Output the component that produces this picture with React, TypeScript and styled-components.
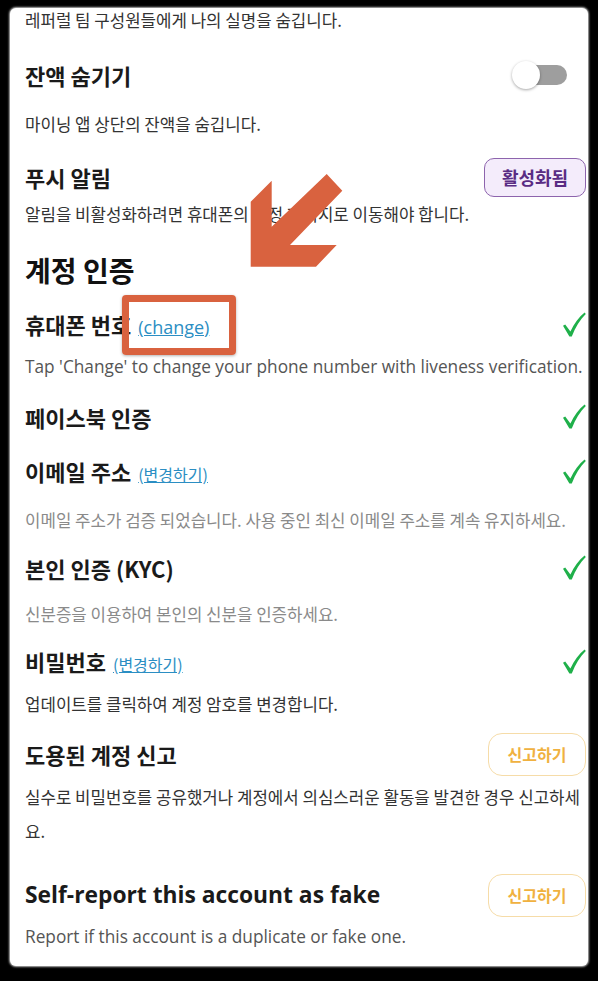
import React from 'react';
import styled, {createGlobalStyle} from 'styled-components';

const GlobalStyle = createGlobalStyle`
  html, body {
    margin: 0;
    padding: 0;
    background: #000;
  }
  body {
    font-family: "Noto Sans CJK KR", sans-serif;
    color: #222;
  }
`;

const EN = '"Open Sans", "Noto Sans CJK KR", sans-serif';
const KR = '"Noto Sans CJK KR", sans-serif';

const Screen = styled.div`
  width: 598px;
  height: 981px;
  padding: 8px 10px 15px 10px;
  box-sizing: border-box;
  overflow: hidden;
`;

const Card = styled.div`
  position: relative;
  height: 100%;
  background: #fff;
  border-radius: 6px;
  box-shadow: 0 0 2px 1px #bbb;
  padding: 0 2px 0 15px;
  box-sizing: border-box;
  overflow: hidden;
`;

const Block = styled.div<{ $mt: number }>`
  margin-top: ${p => p.$mt}px;
`;

const Head = styled.div<{ $mb: number }>`
  display: flex;
  align-items: center;
  justify-content: space-between;
  height: 32px;
  margin-bottom: ${p => p.$mb}px;
`;

const Title = styled.div<{ $en?: boolean }>`
  font-family: ${p => p.$en ? EN : KR};
  font-size: ${p => p.$en ? 22.8 : 22}px;
  font-weight: 700;
  color: #1a1a1a;
  line-height: 32px;
  white-space: nowrap;
`;

const Section = styled.div`
  font-family: ${KR};
  font-size: 28px;
  font-weight: 700;
  color: #111;
  line-height: 36px;
`;

const Desc = styled.div<{ $tone?: 'dark' | 'mid' | 'light'; $lh?: number; $en?: boolean }>`
  font-family: ${p => p.$en ? EN : KR};
  font-size: ${p => p.$en ? 17.25 : 16.8}px;
  line-height: ${p => p.$lh ?? 26}px;
  color: ${p => p.$tone === 'light' ? '#8a8a8a' : p.$tone === 'mid' ? '#555' : '#333'};
  white-space: ${p => p.$en ? 'nowrap' : 'normal'};
`;

const Link = styled.a<{ $en?: boolean }>`
  font-family: ${p => p.$en ? EN : KR};
  font-size: ${p => p.$en ? 18 : 16}px;
  font-weight: 400;
  color: #2b8ec3;
  text-decoration: underline;
  margin-left: 2px;
`;

const Toggle = styled.div`
  position: relative;
  width: 56px;
  height: 28px;
  margin-right: 18px;
  flex-shrink: 0;
  &::before {
    content: '';
    position: absolute;
    left: 9px;
    top: 4px;
    width: 46px;
    height: 20px;
    border-radius: 10px;
    background: #9e9e9e;
  }
  &::after {
    content: '';
    position: absolute;
    left: 0;
    top: 0;
    width: 28px;
    height: 28px;
    border-radius: 50%;
    background: #fff;
    box-shadow: 0 1px 3px rgba(0, 0, 0, 0.35);
  }
`;

const Pill = styled.button<{ $kind: 'active' | 'report' }>`
  font-family: ${KR};
  font-weight: 700;
  box-sizing: border-box;
  cursor: pointer;
  flex-shrink: 0;
  padding: 0;
  ${p => p.$kind === 'active' ? `
    width: 102px;
    height: 39px;
    border-radius: 10px;
    border: 1.5px solid #8d64ad;
    background: #f4ecfb;
    color: #5a2c84;
    font-size: 18px;
  ` : `
    width: 98px;
    height: 43px;
    border-radius: 14px;
    border: 1.5px solid #f6dca8;
    background: #fff;
    color: #f0b140;
    font-size: 16px;
  `}
`;

const Check = () => (
  <svg width="24" height="26" viewBox="0 0 24 26" style={{flexShrink: 0}}>
    <path d="M1 13.8 L3.2 12.4 L8.4 19.6 C12.2 11.6 16.8 5.4 22.6 0.6 L23.8 2 C18.2 7.4 13.4 15 9.8 24.6 L7.4 24.6 Z"
          fill="#1fb04a"/>
  </svg>
);

const Highlight = styled.div`
  position: absolute;
  left: 112px;
  top: 287px;
  width: 114px;
  height: 60px;
  box-sizing: border-box;
  border: 7px solid #d9623f;
  border-radius: 4px;
  box-shadow: 0 1px 3px rgba(0, 0, 0, 0.3);
`;

const Arrow = styled.svg`
  position: absolute;
  left: 220px;
  top: 157px;
`;

function App() {
  return (
    <Screen>
      <GlobalStyle/>
      <Card>
        <Desc $lh={24}>레퍼럴 팀 구성원들에게 나의 실명을 숨깁니다.</Desc>

        <Block $mt={27}>
          <Head $mb={20}>
            <Title>잔액 숨기기</Title>
            <Toggle/>
          </Head>
          <Desc>마이닝 앱 상단의 잔액을 숨깁니다.</Desc>
        </Block>

        <Block $mt={24}>
          <Head $mb={8}>
            <Title>푸시 알림</Title>
            <Pill $kind="active">활성화됨</Pill>
          </Head>
          <Desc>알림을 비활성화하려면 휴대폰의 설정 페이지로 이동해야 합니다.</Desc>
        </Block>

        <Block $mt={25}>
          <Section>계정 인증</Section>
        </Block>

        <Block $mt={21}>
          <Head $mb={13}>
            <Title>휴대폰 번호 <Link $en href="#">(change)</Link></Title>
            <Check/>
          </Head>
          <Desc $tone="mid" $en>Tap 'Change' to change your phone number with liveness verification.</Desc>
        </Block>

        <Block $mt={21}>
          <Head $mb={0}>
            <Title>페이스북 인증</Title>
            <Check/>
          </Head>
        </Block>

        <Block $mt={23}>
          <Head $mb={19}>
            <Title>이메일 주소 <Link href="#">(변경하기)</Link></Title>
            <Check/>
          </Head>
          <Desc $tone="light">이메일 주소가 검증 되었습니다. 사용 중인 최신 이메일 주소를 계속 유지하세요.</Desc>
        </Block>

        <Block $mt={19}>
          <Head $mb={17}>
            <Title>본인 인증 (KYC)</Title>
            <Check/>
          </Head>
          <Desc $tone="light">신분증을 이용하여 본인의 신분을 인증하세요.</Desc>
        </Block>

        <Block $mt={19}>
          <Head $mb={13}>
            <Title>비밀번호 <Link href="#">(변경하기)</Link></Title>
            <Check/>
          </Head>
          <Desc>업데이트를 클릭하여 계정 암호를 변경합니다.</Desc>
        </Block>

        <Block $mt={21}>
          <Head $mb={10}>
            <Title>도용된 계정 신고</Title>
            <Pill $kind="report">신고하기</Pill>
          </Head>
          <Desc $lh={34}>실수로 비밀번호를 공유했거나 계정에서 의심스러운 활동을 발견한 경우 신고하세요.</Desc>
        </Block>

        <Block $mt={31}>
          <Head $mb={13}>
            <Title $en>Self-report this account as fake</Title>
            <Pill $kind="report">신고하기</Pill>
          </Head>
          <Desc $tone="mid" $en>Report if this account is a duplicate or fake one.</Desc>
        </Block>

        <Highlight/>
        <Arrow width="120" height="110" viewBox="0 0 120 110">
          <polygon fill="#d9623f"
                   points="20.7,36.7 41.7,15.7 41.7,61.7 96.7,9 112.3,25.7 60,80 106.7,80 86,101.7 20.7,101.7"/>
        </Arrow>
      </Card>
    </Screen>
  );
}

export default App;
